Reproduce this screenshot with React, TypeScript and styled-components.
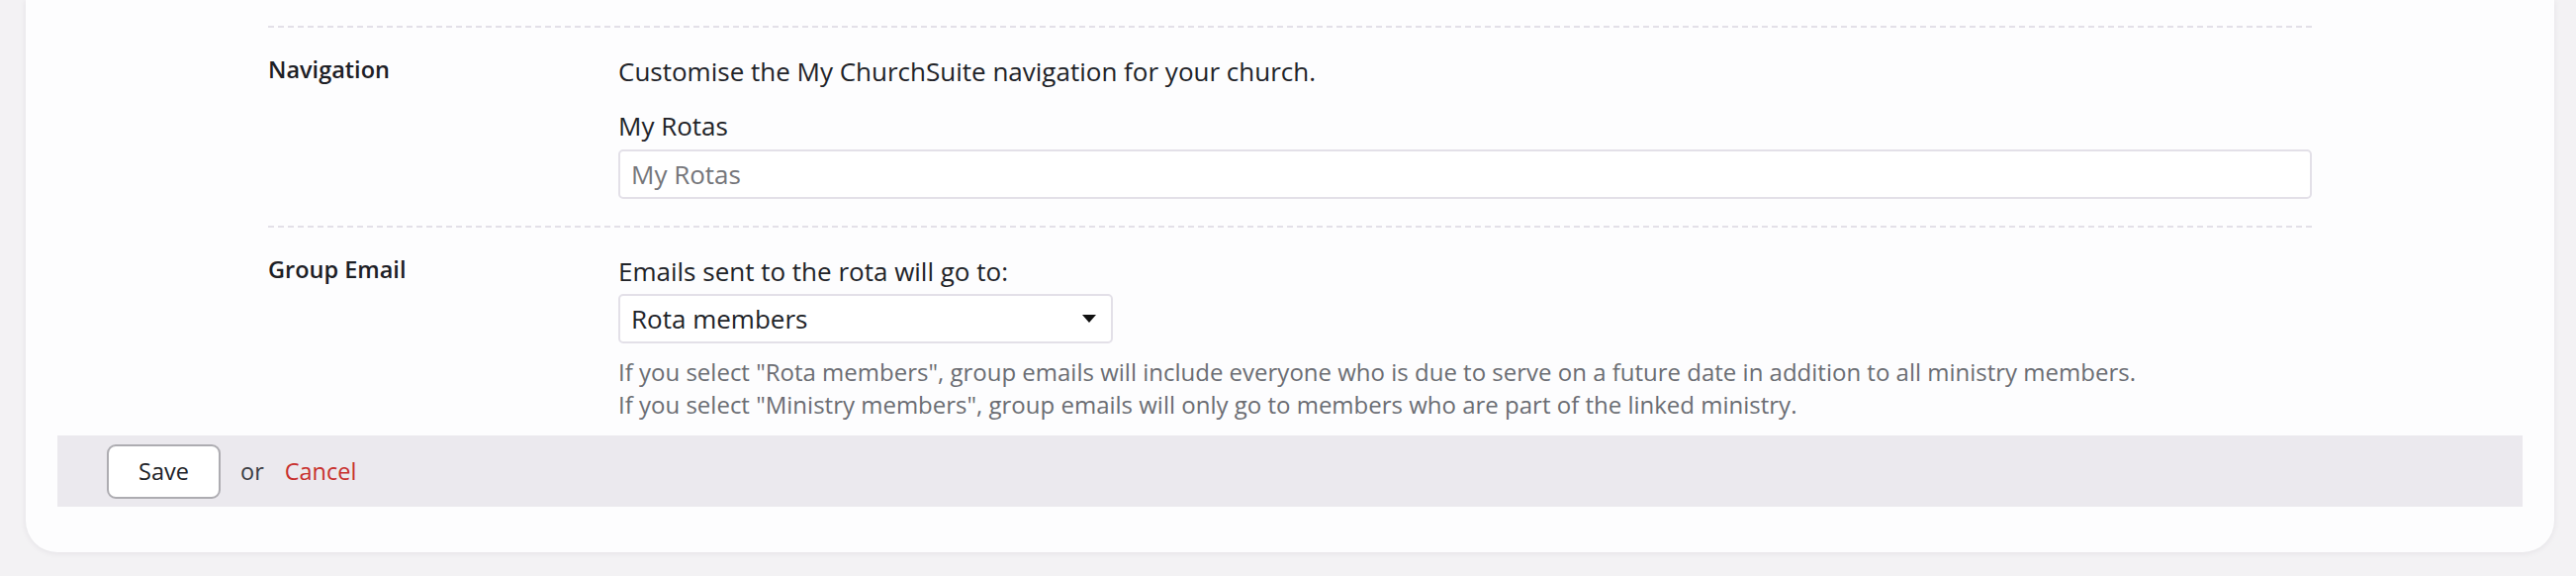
import React from 'react';
import styled, { createGlobalStyle } from 'styled-components';

const GlobalStyle = createGlobalStyle`
  html, body {
    margin: 0;
    padding: 0;
    background: #f3f2f4;
  }
  body {
    font-family: 'Open Sans', 'Noto Sans', sans-serif;
    color: #212328;
  }
  * {
    box-sizing: border-box;
  }
`;

const Page = styled.div`
  padding: 0 22px 24px 26px;
`;

const Card = styled.div`
  background: #fdfdfe;
  border-radius: 0 0 32px 32px;
  box-shadow: 0 1px 6px rgba(50, 40, 70, 0.08);
  padding: 26px 32px 46px;
`;

const Form = styled.div`
  max-width: 2066px;
  margin: 0 auto;
`;

// each row carries its own dashed rule on top
const Row = styled.div<{ $bottom: number }>`
  display: grid;
  grid-template-columns: 354px 1fr;
  padding: 27px 0 ${(p) => p.$bottom}px;
  background-image: repeating-linear-gradient(
    to right,
    #e3e0e8 0 6px,
    transparent 6px 10px
  );
  background-size: 100% 2px;
  background-repeat: no-repeat;
  background-position: top left;
`;

const RowLabel = styled.div`
  font-size: 23.5px;
  font-weight: 600;
  line-height: 1.5;
  color: #1d2026;
`;

const Field = styled.div`
  display: flex;
  flex-direction: column;
  align-items: flex-start;
`;

const Text = styled.p<{ $gap: number }>`
  margin: 0 0 ${(p) => p.$gap}px;
  font-size: 26px;
  line-height: 1.5;
  color: #212328;
`;

const TextInput = styled.input`
  display: block;
  width: 100%;
  height: 50px;
  padding: 0 11px;
  border: 2px solid #e3e0e8;
  border-radius: 5px;
  background: #ffffff;
  font-family: inherit;
  font-size: 26px;
  color: #212328;
  outline: none;

  &::placeholder {
    color: #75767a;
  }
`;

const SelectWrap = styled.div`
  position: relative;
  width: 500px;
`;

const Select = styled.select`
  display: block;
  appearance: none;
  -webkit-appearance: none;
  width: 100%;
  height: 50px;
  padding: 0 40px 0 11px;
  border: 2px solid #e3e0e8;
  border-radius: 5px;
  background: #ffffff;
  font-family: inherit;
  font-size: 26px;
  color: #212328;
  outline: none;
`;

const Caret = styled.svg`
  position: absolute;
  right: 17px;
  top: 21px;
  pointer-events: none;
`;

const Help = styled.div`
  margin-top: 12px;
  font-size: 24px;
  line-height: 33px;
  color: #6b6d73;
`;

const Footer = styled.div`
  display: flex;
  align-items: center;
  gap: 20px;
  height: 72px;
  padding: 0 50px;
  background: #ebe9ee;
  font-size: 23.5px;
`;

const Button = styled.button`
  width: 115px;
  height: 55px;
  border: 2px solid #adacb1;
  border-radius: 9px;
  background: #ffffff;
  font-family: inherit;
  font-size: 23.5px;
  color: #212328;
  padding: 0;
`;

const Or = styled.span`
  color: #3b3e44;
`;

const CancelLink = styled.a`
  color: #c8302d;
  text-decoration: none;
  margin-left: 1px;
`;

export default function App() {
  return (
    <>
      <GlobalStyle />
      <Page>
        <Card>
          <Form>
            <Row $bottom={27}>
              <RowLabel>Navigation</RowLabel>
              <Field>
                <Text $gap={16}>Customise the My ChurchSuite navigation for your church.</Text>
                <Text $gap={4}>My Rotas</Text>
                <TextInput placeholder="My Rotas" />
              </Field>
            </Row>
            <Row $bottom={15}>
              <RowLabel>Group Email</RowLabel>
              <Field>
                <Text $gap={3}>Emails sent to the rota will go to:</Text>
                <SelectWrap>
                  <Select defaultValue="rota">
                    <option value="rota">Rota members</option>
                    <option value="ministry">Ministry members</option>
                  </Select>
                  <Caret width="14" height="8" viewBox="0 0 14 8">
                    <path d="M0 0h14L7 8z" fill="#111" />
                  </Caret>
                </SelectWrap>
                <Help>
                  If you select "Rota members", group emails will include everyone who is due to serve on a future date in addition to all ministry members.
                  <br />
                  If you select "Ministry members", group emails will only go to members who are part of the linked ministry.
                </Help>
              </Field>
            </Row>
          </Form>
          <Footer>
            <Button>Save</Button>
            <Or>or</Or>
            <CancelLink href="#">Cancel</CancelLink>
          </Footer>
        </Card>
      </Page>
    </>
  );
}
